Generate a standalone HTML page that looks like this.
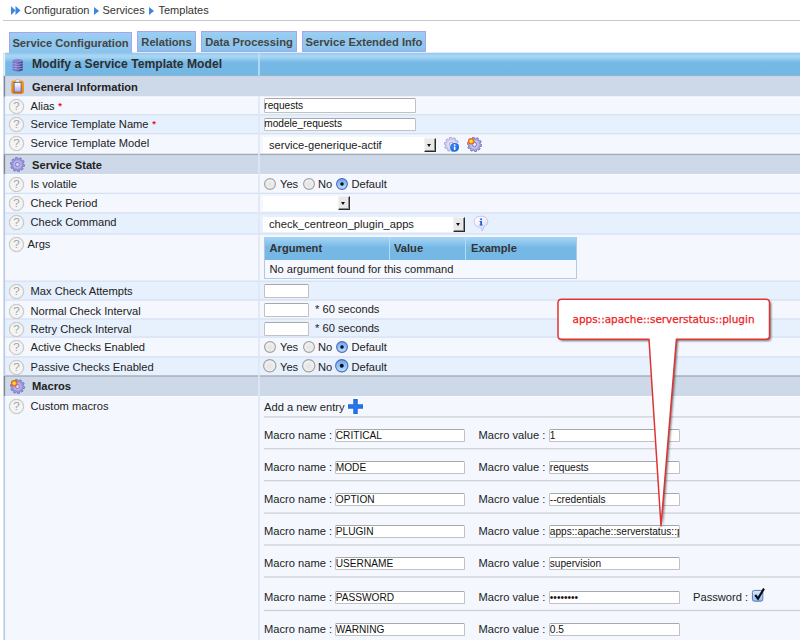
<!DOCTYPE html>
<html><head><meta charset="utf-8"><title>Templates</title>
<style>
html,body{margin:0;padding:0;}
body{width:800px;height:640px;overflow:hidden;background:#fff;font-family:"Liberation Sans",Arial,sans-serif;font-size:11px;color:#222;position:relative;}
div,span{box-sizing:border-box;}
.bc{position:absolute;left:24px;top:3px;font-size:11px;color:#333;white-space:nowrap;line-height:14px;}
.hr{position:absolute;left:3px;top:20px;width:797px;height:1px;background:#c9c9c9;}
.tab{position:absolute;border:1px solid #a9a3ec;border-bottom:none;background:linear-gradient(#9bcef2,#88c3ec);font-weight:bold;font-size:11.2px;color:#444;text-align:center;white-space:nowrap;}
.lbl{position:absolute;left:31px;font-size:11.15px;line-height:14px;color:#222;white-space:nowrap;}
.sec{position:absolute;left:32px;font-weight:bold;font-size:11.15px;line-height:14px;color:#222;white-space:nowrap;}
.req{color:#f0102a;font-size:9.5px;font-weight:bold;position:relative;top:-1.5px;left:0.5px;}
.q{position:absolute;left:9px;width:15px;height:15px;border:1px solid #c6c6c6;border-radius:50%;background:#f4f4f4;color:#a2a2a2;font-size:11.5px;line-height:13px;text-align:center;box-shadow:0 0 1px #ccc;}
.inp{position:absolute;border:1px solid #c2c2c2;border-top-color:#a8a8a8;border-radius:1.5px;background:#fff;font-size:10.3px;color:#111;line-height:13px;padding-left:0.5px;white-space:nowrap;overflow:hidden;}
.itx{position:absolute;font-size:10.15px;line-height:14px;color:#111;white-space:nowrap;overflow:hidden;}
.txt{position:absolute;font-size:11.15px;line-height:14px;color:#222;white-space:nowrap;}
.selbg{position:absolute;background:#fff;}
.arrow{position:absolute;width:12px;height:14px;border-top:1px solid #f2f2f2;border-left:1px solid #f2f2f2;border-right:1px solid #2a2a2a;border-bottom:1px solid #2a2a2a;background:#e9e9e9;box-shadow:inset -1px -1px 0 #8c8c8c;}
.arrow::after{content:"";position:absolute;left:2px;top:4.5px;border-left:2.8px solid transparent;border-right:2.8px solid transparent;border-top:3px solid #111;}
</style></head><body>

<svg style="position:absolute;left:11px;top:6px" width="10" height="9" viewBox="0 0 10 9"><path d="M0 0 L4.5 4.5 L0 9 Z M4.5 0 L9.5 4.5 L4.5 9 Z" fill="#3a86e0"/></svg>
<div class="bc" style="left:24px;">Configuration</div>
<svg style="position:absolute;left:94px;top:6.5px" width="5" height="8" viewBox="0 0 5 8"><path d="M0 0 L5 4 L0 8 Z" fill="#3a86e0"/></svg>
<div class="bc" style="left:102.5px;">Services</div>
<svg style="position:absolute;left:149px;top:6.5px" width="5" height="8" viewBox="0 0 5 8"><path d="M0 0 L5 4 L0 8 Z" fill="#3a86e0"/></svg>
<div class="bc" style="left:158.5px;">Templates</div>
<div class="hr"></div>
<div class="tab" style="left:9px;top:32px;width:123px;height:21px;line-height:20px;">Service Configuration</div>
<div class="tab" style="left:137px;top:31px;width:59px;height:21px;line-height:20px;border-bottom:1px solid #a9a3ec;">Relations</div>
<div class="tab" style="left:201px;top:31px;width:96px;height:21px;line-height:20px;border-bottom:1px solid #a9a3ec;">Data Processing</div>
<div class="tab" style="left:302px;top:31px;width:124px;height:21px;line-height:20px;border-bottom:1px solid #a9a3ec;">Service Extended Info</div>
<svg style="position:absolute;left:0;top:0" width="800" height="640" viewBox="0 0 800 640"><defs><linearGradient id="hg" x1="0" x2="0" y1="0" y2="1"><stop offset="0" stop-color="#8fc4ea"/><stop offset="0.12" stop-color="#a7d6f4"/><stop offset="0.2" stop-color="#a4d4f3"/><stop offset="0.42" stop-color="#76b9e7"/><stop offset="0.95" stop-color="#73b7e5"/><stop offset="1" stop-color="#6fa9d2"/></linearGradient></defs><rect x="4.5" y="75.6" width="796" height="21.00" fill="#cdd8e8"/><rect x="4.5" y="96.6" width="796" height="18.20" fill="#f4f8fe"/><rect x="4.5" y="114.8" width="796" height="18.90" fill="#e7f0fd"/><rect x="4.5" y="133.7" width="796" height="20.70" fill="#f4f8fe"/><rect x="4.5" y="154.4" width="796" height="19.60" fill="#cdd8e8"/><rect x="4.5" y="174.0" width="796" height="19.40" fill="#f4f8fe"/><rect x="4.5" y="193.4" width="796" height="19.60" fill="#f4f8fe"/><rect x="4.5" y="213.0" width="796" height="21.00" fill="#e7f0fd"/><rect x="4.5" y="234.0" width="796" height="47.20" fill="#f4f8fe"/><rect x="4.5" y="281.2" width="796" height="18.80" fill="#e7f0fd"/><rect x="4.5" y="300.0" width="796" height="19.00" fill="#f4f8fe"/><rect x="4.5" y="319.0" width="796" height="18.10" fill="#e7f0fd"/><rect x="4.5" y="337.1" width="796" height="19.90" fill="#f4f8fe"/><rect x="4.5" y="357.0" width="796" height="19.00" fill="#e7f0fd"/><rect x="4.5" y="376.0" width="796" height="20.00" fill="#cdd8e8"/><rect x="4.5" y="396.0" width="796" height="244.00" fill="#f4f8fe"/><rect x="4.5" y="52.7" width="796" height="22.9" fill="url(#hg)"/><rect x="4.5" y="114.10" width="796" height="1.4" fill="#d7e1f2"/><rect x="4.5" y="133.00" width="796" height="1.4" fill="#d7e1f2"/><rect x="4.5" y="192.70" width="796" height="1.4" fill="#d7e1f2"/><rect x="4.5" y="212.30" width="796" height="1.4" fill="#d7e1f2"/><rect x="4.5" y="233.30" width="796" height="1.4" fill="#d7e1f2"/><rect x="4.5" y="280.50" width="796" height="1.4" fill="#d7e1f2"/><rect x="4.5" y="299.30" width="796" height="1.4" fill="#d7e1f2"/><rect x="4.5" y="318.30" width="796" height="1.4" fill="#d7e1f2"/><rect x="4.5" y="336.40" width="796" height="1.4" fill="#d7e1f2"/><rect x="4.5" y="356.30" width="796" height="1.4" fill="#d7e1f2"/><rect x="4.5" y="96.70" width="796" height="1" fill="#fbfcff" opacity="0.8"/><rect x="4.5" y="152.70" width="796" height="1" fill="#fbfcff" opacity="0.8"/><rect x="4.5" y="174.00" width="796" height="1" fill="#fbfcff" opacity="0.8"/><rect x="4.5" y="396.00" width="796" height="1" fill="#fbfcff" opacity="0.8"/><rect x="4.5" y="153.70" width="796" height="1.4" fill="#a4abb5"/><rect x="4.5" y="375.30" width="796" height="1.4" fill="#a4abb5"/><rect x="4.5" y="75.2" width="796" height="0.9" fill="#8fa9c2" opacity="0.7"/><rect x="258.1" y="96.6" width="1.7" height="544" fill="#dfe7f6"/><rect x="258.1" y="52.7" width="1.7" height="22.9" fill="#b9def7"/><rect x="3.4" y="53" width="1.7" height="587" fill="#b8cbe5"/><rect x="3.8" y="75.6" width="1.3" height="21.00" fill="#80858e"/><rect x="3.8" y="154.4" width="1.3" height="19.60" fill="#80858e"/><rect x="3.8" y="376.0" width="1.3" height="20.00" fill="#80858e"/><rect x="3.6" y="53.2" width="1.5" height="22.4" fill="#e4f0fa"/></svg>
<svg style="position:absolute;left:12px;top:57.6px" width="12" height="15" viewBox="0 0 12 15"><defs><linearGradient id="dbg" x1="0" x2="1" y1="0" y2="0"><stop offset="0" stop-color="#6b65bc"/><stop offset="0.3" stop-color="#7f7acc"/><stop offset="0.7" stop-color="#5650a4"/><stop offset="1" stop-color="#322e78"/></linearGradient></defs><path d="M0.7 2.8 Q5.6 0.4 10.6 2.8 V12.2 Q5.6 14.9 0.7 12.2 Z" fill="url(#dbg)"/><ellipse cx="5.65" cy="2.9" rx="4.9" ry="1.3" fill="#8a85d2"/><path d="M0.8 5.6 Q5.6 6.9 10.5 5.6 M0.8 8 Q5.6 9.3 10.5 8 M0.8 10.4 Q5.6 11.7 10.5 10.4" fill="none" stroke="#c4c1ef" stroke-width="0.8" opacity="0.8"/></svg>
<svg style="position:absolute;left:11px;top:79px" width="14" height="16" viewBox="0 0 14 16"><defs><linearGradient id="cpg" x1="0" x2="0" y1="0" y2="1"><stop offset="0" stop-color="#f59a28"/><stop offset="1" stop-color="#e8830f"/></linearGradient><linearGradient id="ppg" x1="0" x2="0" y1="0" y2="1"><stop offset="0" stop-color="#ffffff"/><stop offset="0.35" stop-color="#e6e5fa"/><stop offset="1" stop-color="#a9a6ea"/></linearGradient></defs><rect x="0.3" y="1.6" width="12.6" height="13.4" rx="2.4" fill="url(#cpg)"/><rect x="3.1" y="3.5" width="7" height="9.6" fill="url(#ppg)" stroke="#5e5d74" stroke-width="0.8"/><rect x="4.8" y="0.5" width="3.6" height="2.6" rx="0.9" fill="#e9e9ee" stroke="#a8a8b0" stroke-width="0.5"/></svg>
<svg style="position:absolute;left:10px;top:157px" width="15" height="15" viewBox="0 0 15 15"><path d="M14.70 7.68 L14.43 9.46 L12.85 9.46 L12.28 10.61 L13.22 11.87 L11.95 13.16 L10.68 12.23 L9.54 12.82 L9.56 14.40 L7.78 14.69 L7.29 13.20 L6.02 13.00 L5.11 14.29 L3.50 13.48 L3.98 11.98 L3.07 11.08 L1.57 11.59 L0.74 9.99 L2.02 9.06 L1.81 7.79 L0.30 7.32 L0.57 5.54 L2.15 5.54 L2.72 4.39 L1.78 3.13 L3.05 1.84 L4.32 2.77 L5.46 2.18 L5.44 0.60 L7.22 0.31 L7.71 1.80 L8.98 2.00 L9.89 0.71 L11.50 1.52 L11.02 3.02 L11.93 3.92 L13.43 3.41 L14.26 5.01 L12.98 5.94 L13.19 7.21 Z" fill="#9a95da" stroke="#6f6abf" stroke-width="0.7" stroke-linejoin="round"/><circle cx="7.5" cy="7.5" r="4.3" fill="#fff" opacity="0.28"/><circle cx="7.5" cy="7.5" r="2.1" fill="#d5d3f3" stroke="#6f6abf" stroke-width="0.7"/></svg>
<svg style="position:absolute;left:10px;top:379px" width="15" height="15" viewBox="0 0 15 15"><path d="M14.70 7.68 L14.43 9.46 L12.85 9.46 L12.28 10.61 L13.22 11.87 L11.95 13.16 L10.68 12.23 L9.54 12.82 L9.56 14.40 L7.78 14.69 L7.29 13.20 L6.02 13.00 L5.11 14.29 L3.50 13.48 L3.98 11.98 L3.07 11.08 L1.57 11.59 L0.74 9.99 L2.02 9.06 L1.81 7.79 L0.30 7.32 L0.57 5.54 L2.15 5.54 L2.72 4.39 L1.78 3.13 L3.05 1.84 L4.32 2.77 L5.46 2.18 L5.44 0.60 L7.22 0.31 L7.71 1.80 L8.98 2.00 L9.89 0.71 L11.50 1.52 L11.02 3.02 L11.93 3.92 L13.43 3.41 L14.26 5.01 L12.98 5.94 L13.19 7.21 Z" fill="#9a95da" stroke="#6f6abf" stroke-width="0.7" stroke-linejoin="round"/><circle cx="7.5" cy="7.5" r="4.3" fill="#fff" opacity="0.28"/><circle cx="7.5" cy="7.5" r="2.1" fill="#d5d3f3" stroke="#6f6abf" stroke-width="0.7"/><circle cx="4.2" cy="4.2" r="3.3" fill="#f0531f" opacity="0.85"/><circle cx="4.2" cy="4.2" r="2.3" fill="#ff9414"/><circle cx="4.2" cy="4.2" r="1.5" fill="#ffe620"/></svg>
<svg style="position:absolute;left:444px;top:136.5px" width="15" height="15" viewBox="0 0 15 15"><path d="M14.70 7.68 L14.43 9.46 L12.85 9.46 L12.28 10.61 L13.22 11.87 L11.95 13.16 L10.68 12.23 L9.54 12.82 L9.56 14.40 L7.78 14.69 L7.29 13.20 L6.02 13.00 L5.11 14.29 L3.50 13.48 L3.98 11.98 L3.07 11.08 L1.57 11.59 L0.74 9.99 L2.02 9.06 L1.81 7.79 L0.30 7.32 L0.57 5.54 L2.15 5.54 L2.72 4.39 L1.78 3.13 L3.05 1.84 L4.32 2.77 L5.46 2.18 L5.44 0.60 L7.22 0.31 L7.71 1.80 L8.98 2.00 L9.89 0.71 L11.50 1.52 L11.02 3.02 L11.93 3.92 L13.43 3.41 L14.26 5.01 L12.98 5.94 L13.19 7.21 Z" fill="#d2d1f0" stroke="#9795d0" stroke-width="0.7" stroke-linejoin="round"/><circle cx="7.5" cy="7.5" r="4.3" fill="#fff" opacity="0.28"/><circle cx="7.5" cy="7.5" r="2.1" fill="#ecebfa" stroke="#9795d0" stroke-width="0.7"/><circle cx="10.6" cy="10.4" r="4.4" fill="#1f6fe0"/><circle cx="10" cy="9.6" r="3" fill="#3f8df0" opacity="0.6"/><rect x="9.9" y="9.6" width="1.5" height="3.4" fill="#fff"/><rect x="9.9" y="7.4" width="1.5" height="1.4" fill="#fff"/></svg>
<svg style="position:absolute;left:466.5px;top:137px" width="15" height="15" viewBox="0 0 15 15"><path d="M14.70 7.68 L14.43 9.46 L12.85 9.46 L12.28 10.61 L13.22 11.87 L11.95 13.16 L10.68 12.23 L9.54 12.82 L9.56 14.40 L7.78 14.69 L7.29 13.20 L6.02 13.00 L5.11 14.29 L3.50 13.48 L3.98 11.98 L3.07 11.08 L1.57 11.59 L0.74 9.99 L2.02 9.06 L1.81 7.79 L0.30 7.32 L0.57 5.54 L2.15 5.54 L2.72 4.39 L1.78 3.13 L3.05 1.84 L4.32 2.77 L5.46 2.18 L5.44 0.60 L7.22 0.31 L7.71 1.80 L8.98 2.00 L9.89 0.71 L11.50 1.52 L11.02 3.02 L11.93 3.92 L13.43 3.41 L14.26 5.01 L12.98 5.94 L13.19 7.21 Z" fill="#aeabe0" stroke="#5f5bb0" stroke-width="0.7" stroke-linejoin="round"/><circle cx="7.5" cy="7.5" r="4.3" fill="#fff" opacity="0.28"/><circle cx="7.5" cy="7.5" r="2.1" fill="#e6e5f8" stroke="#5f5bb0" stroke-width="0.7"/><circle cx="4.2" cy="4.2" r="3.3" fill="#f0531f" opacity="0.85"/><circle cx="4.2" cy="4.2" r="2.3" fill="#ff9414"/><circle cx="4.2" cy="4.2" r="1.5" fill="#ffe620"/></svg>
<svg style="position:absolute;left:473px;top:215px" width="16" height="17" viewBox="0 0 16 17"><defs><linearGradient id="bg1" x1="0" x2="1" y1="0" y2="1"><stop offset="0" stop-color="#ffffff"/><stop offset="0.5" stop-color="#f1f0fc"/><stop offset="1" stop-color="#cfcdf2"/></linearGradient></defs><path d="M8 1.2 C12 1.2 14.8 3.4 14.8 6.6 C14.8 9.2 13 11.2 10.6 11.9 C10.6 13.6 10 15 8.8 16 C9.1 14.6 8.8 13.2 7.8 12.4 C3.8 12.3 1.2 9.8 1.2 6.6 C1.2 3.4 4 1.2 8 1.2 Z" fill="url(#bg1)" stroke="#bdbbea" stroke-width="0.9"/><rect x="7.2" y="6" width="1.8" height="4.2" fill="#1c63d8"/><rect x="6.5" y="6" width="1.2" height="0.9" fill="#1c63d8"/><rect x="6.5" y="9.6" width="3.2" height="0.9" fill="#1c63d8"/><circle cx="8.1" cy="4.2" r="1" fill="#1c63d8"/></svg>
<div class="sec" style="left:32px;top:57px;font-size:12.15px;line-height:15px;color:#2e2e2e;">Modify a Service Template Model</div>
<div class="sec" style="top:80px;">General Information</div>
<div class="sec" style="top:158px;">Service State</div>
<div class="sec" style="top:379px;">Macros</div>
<div class="q" style="top:99px;">?</div>
<div class="lbl" style="left:30.5px;top:99px;">Alias <span class="req">*</span></div>
<div class="q" style="top:117px;">?</div>
<div class="lbl" style="left:30.5px;top:117px;">Service Template Name <span class="req">*</span></div>
<div class="q" style="top:136px;">?</div>
<div class="lbl" style="left:30.5px;top:136px;">Service Template Model</div>
<div class="q" style="top:177px;">?</div>
<div class="lbl" style="left:30.5px;top:177px;">Is volatile</div>
<div class="q" style="top:196px;">?</div>
<div class="lbl" style="left:30.5px;top:196px;">Check Period</div>
<div class="q" style="top:215px;">?</div>
<div class="lbl" style="left:30.5px;top:215px;">Check Command</div>
<div class="q" style="top:237px;">?</div>
<div class="lbl" style="left:27.5px;top:237px;">Args</div>
<div class="q" style="top:284px;">?</div>
<div class="lbl" style="left:30.5px;top:284px;">Max Check Attempts</div>
<div class="q" style="top:304px;">?</div>
<div class="lbl" style="left:30.5px;top:304px;">Normal Check Interval</div>
<div class="q" style="top:322px;">?</div>
<div class="lbl" style="left:30.5px;top:322px;">Retry Check Interval</div>
<div class="q" style="top:340px;">?</div>
<div class="lbl" style="left:30.5px;top:340px;">Active Checks Enabled</div>
<div class="q" style="top:360px;">?</div>
<div class="lbl" style="left:30.5px;top:360px;">Passive Checks Enabled</div>
<div class="q" style="top:399px;">?</div>
<div class="lbl" style="left:30.5px;top:399px;">Custom macros</div>
<div class="inp" style="left:263.5px;top:98px;width:152.5px;height:14.5px;"></div>
<div class="itx" style="left:264.3px;top:98.6px;width:150.7px;">requests</div>
<div class="inp" style="left:263.5px;top:118px;width:152.5px;height:13px;"></div>
<div class="itx" style="left:264.3px;top:117px;width:150.7px;">modele_requests</div>
<div class="selbg" style="left:263px;top:137px;width:161px;height:16px;"></div>
<div class="txt" style="left:269px;top:138px;">service-generique-actif</div>
<div class="arrow" style="left:424px;top:138px;"></div>
<svg width="0" height="0" style="position:absolute"><defs><radialGradient id="rg0" cx="0.5" cy="0.55" r="0.6"><stop offset="0" stop-color="#e2e2e2"/><stop offset="0.7" stop-color="#f0f0f0"/><stop offset="1" stop-color="#fcfcfc"/></radialGradient><linearGradient id="rg1" x1="0" x2="0" y1="0" y2="1"><stop offset="0" stop-color="#68a8ee"/><stop offset="0.55" stop-color="#93c8f8"/><stop offset="1" stop-color="#c0e3fd"/></linearGradient></defs></svg>
<svg style="position:absolute;left:263.20px;top:176.80px" width="14" height="14" viewBox="0 0 14 14"><circle cx="7.0" cy="7.0" r="5.40" fill="url(#rg0)" stroke="#a2a2a2" stroke-width="1.2"/></svg>
<div class="txt" style="left:280px;top:177px;">Yes</div>
<svg style="position:absolute;left:301.70px;top:176.80px" width="14" height="14" viewBox="0 0 14 14"><circle cx="7.0" cy="7.0" r="5.40" fill="url(#rg0)" stroke="#a2a2a2" stroke-width="1.2"/></svg>
<div class="txt" style="left:318px;top:177px;">No</div>
<svg style="position:absolute;left:334.50px;top:176.80px" width="14" height="14" viewBox="0 0 14 14"><circle cx="7.0" cy="7.0" r="5.40" fill="url(#rg1)" stroke="#5566b8" stroke-width="1.1"/><circle cx="7.0" cy="7.0" r="1.74" fill="#0a0a14"/></svg>
<div class="txt" style="left:351.5px;top:177px;">Default</div>
<div class="selbg" style="left:263px;top:196px;width:75px;height:15px;"></div>
<div class="arrow" style="left:338px;top:196px;"></div>
<div class="selbg" style="left:263px;top:217px;width:190px;height:15px;"></div>
<div class="txt" style="left:269px;top:217px;">check_centreon_plugin_apps</div>
<div class="arrow" style="left:453px;top:217px;height:15px;"></div>
<div style="position:absolute;left:264px;top:237px;width:313px;height:41.5px;border:1px solid #b4c8e2;background:#f5f8fe;"></div>
<div style="position:absolute;left:265px;top:237px;width:311px;height:23px;background:linear-gradient(#a8d6f5 0,#76b9e7 45%,#74b7e5 100%);"></div>
<div style="position:absolute;left:389px;top:237px;width:1px;height:23px;background:#b5dcf6;"></div>
<div style="position:absolute;left:465px;top:237px;width:1px;height:23px;background:#b5dcf6;"></div>
<div class="txt" style="left:269.5px;top:241px;font-weight:bold;color:#333;">Argument</div>
<div class="txt" style="left:394px;top:241px;font-weight:bold;color:#333;">Value</div>
<div class="txt" style="left:471px;top:241px;font-weight:bold;color:#333;">Example</div>
<div class="txt" style="left:269.5px;top:262px;">No argument found for this command</div>
<div class="inp" style="left:263.5px;top:284px;width:45px;height:13.5px;"></div>
<div class="inp" style="left:263.5px;top:303px;width:45px;height:13.5px;"></div>
<div class="inp" style="left:263.5px;top:322px;width:45px;height:13.5px;"></div>
<div class="txt" style="left:315px;top:302px;">* 60 seconds</div>
<div class="txt" style="left:315px;top:321px;">* 60 seconds</div>
<svg style="position:absolute;left:263.20px;top:340.20px" width="14" height="14" viewBox="0 0 14 14"><circle cx="7.0" cy="7.0" r="5.40" fill="url(#rg0)" stroke="#a2a2a2" stroke-width="1.2"/></svg>
<div class="txt" style="left:280px;top:340px;">Yes</div>
<svg style="position:absolute;left:301.70px;top:340.20px" width="14" height="14" viewBox="0 0 14 14"><circle cx="7.0" cy="7.0" r="5.40" fill="url(#rg0)" stroke="#a2a2a2" stroke-width="1.2"/></svg>
<div class="txt" style="left:318px;top:340px;">No</div>
<svg style="position:absolute;left:334.50px;top:340.20px" width="14" height="14" viewBox="0 0 14 14"><circle cx="7.0" cy="7.0" r="5.40" fill="url(#rg1)" stroke="#5566b8" stroke-width="1.1"/><circle cx="7.0" cy="7.0" r="1.74" fill="#0a0a14"/></svg>
<div class="txt" style="left:351.5px;top:340px;">Default</div>
<svg style="position:absolute;left:262.45px;top:357.85px" width="15.5" height="15.5" viewBox="0 0 15.5 15.5"><circle cx="7.75" cy="7.75" r="6.15" fill="url(#rg0)" stroke="#a2a2a2" stroke-width="1.2"/></svg>
<div class="txt" style="left:280px;top:360px;">Yes</div>
<svg style="position:absolute;left:300.95px;top:357.85px" width="15.5" height="15.5" viewBox="0 0 15.5 15.5"><circle cx="7.75" cy="7.75" r="6.15" fill="url(#rg0)" stroke="#a2a2a2" stroke-width="1.2"/></svg>
<div class="txt" style="left:318px;top:360px;">No</div>
<svg style="position:absolute;left:333.75px;top:357.85px" width="15.5" height="15.5" viewBox="0 0 15.5 15.5"><circle cx="7.75" cy="7.75" r="6.15" fill="url(#rg1)" stroke="#5566b8" stroke-width="1.1"/><circle cx="7.75" cy="7.75" r="1.96" fill="#0a0a14"/></svg>
<div class="txt" style="left:351.5px;top:360px;">Default</div>
<div class="txt" style="left:264px;top:399.5px;">Add a new entry</div>
<svg style="position:absolute;left:347px;top:397.5px" width="17" height="17" viewBox="-1 -1 17 17"><path d="M5.25 0h4.5v5.25h5.25v4.5h-5.25v5.25h-4.5v-5.25h-5.25v-4.5h5.25z" fill="#1f6be0" stroke="#fff" stroke-width="1.2" stroke-opacity="0.8" paint-order="stroke"/><path d="M6.4 1.2h2.2v5.2h5.2v2.2h-5.2v5.2h-2.2v-5.2h-5.2v-2.2h5.2z" fill="#2b80ee" opacity="0.6"/></svg>
<svg style="position:absolute;left:264px;top:410px" width="536" height="230" viewBox="264 410 536 230"><rect x="264" y="416.25" width="536" height="1.3" fill="#cdd0d4"/><rect x="264" y="448.10" width="536" height="1.3" fill="#cdd0d4"/><rect x="264" y="480.05" width="536" height="1.3" fill="#cdd0d4"/><rect x="264" y="512.45" width="536" height="1.3" fill="#cdd0d4"/><rect x="264" y="544.35" width="536" height="1.3" fill="#cdd0d4"/><rect x="264" y="576.35" width="536" height="1.3" fill="#cdd0d4"/><rect x="264" y="609.85" width="536" height="1.3" fill="#cdd0d4"/></svg>
<div class="txt" style="left:264px;top:428px;">Macro name :</div>
<div class="inp" style="left:335px;top:429px;width:130px;height:13px;"></div>
<div class="itx" style="left:335.8px;top:428.5px;width:128.2px;">CRITICAL</div>
<div class="txt" style="left:478.5px;top:428px;">Macro value :</div>
<div class="inp" style="left:549px;top:429px;width:131px;height:13px;"></div>
<div class="itx" style="left:549.8px;top:428.5px;width:129.2px;">1</div>
<div class="txt" style="left:264px;top:460px;">Macro name :</div>
<div class="inp" style="left:335px;top:461px;width:130px;height:13px;"></div>
<div class="itx" style="left:335.8px;top:460.5px;width:128.2px;">MODE</div>
<div class="txt" style="left:478.5px;top:460px;">Macro value :</div>
<div class="inp" style="left:549px;top:461px;width:131px;height:13px;"></div>
<div class="itx" style="left:549.8px;top:460.5px;width:129.2px;">requests</div>
<div class="txt" style="left:264px;top:492px;">Macro name :</div>
<div class="inp" style="left:335px;top:493px;width:130px;height:13px;"></div>
<div class="itx" style="left:335.8px;top:492.5px;width:128.2px;">OPTION</div>
<div class="txt" style="left:478.5px;top:492px;">Macro value :</div>
<div class="inp" style="left:549px;top:493px;width:131px;height:13px;"></div>
<div class="itx" style="left:549.8px;top:492.5px;width:129.2px;">--credentials</div>
<div class="txt" style="left:264px;top:524px;">Macro name :</div>
<div class="inp" style="left:335px;top:525px;width:130px;height:13px;"></div>
<div class="itx" style="left:335.8px;top:524.5px;width:128.2px;">PLUGIN</div>
<div class="txt" style="left:478.5px;top:524px;">Macro value :</div>
<div class="inp" style="left:549px;top:525px;width:131px;height:13px;"></div>
<div class="itx" style="left:549.8px;top:524.5px;width:129.2px;">apps::apache::serverstatus::plugin</div>
<div class="txt" style="left:264px;top:556px;">Macro name :</div>
<div class="inp" style="left:335px;top:557px;width:130px;height:13px;"></div>
<div class="itx" style="left:335.8px;top:556.5px;width:128.2px;">USERNAME</div>
<div class="txt" style="left:478.5px;top:556px;">Macro value :</div>
<div class="inp" style="left:549px;top:557px;width:131px;height:13px;"></div>
<div class="itx" style="left:549.8px;top:556.5px;width:129.2px;">supervision</div>
<div class="txt" style="left:264px;top:590px;">Macro name :</div>
<div class="inp" style="left:335px;top:591px;width:130px;height:13px;"></div>
<div class="itx" style="left:335.8px;top:590.5px;width:128.2px;">PASSWORD</div>
<div class="txt" style="left:478.5px;top:590px;">Macro value :</div>
<div class="inp" style="left:549px;top:591px;width:131px;height:13px;"></div>
<div class="itx" style="left:549.8px;top:590.5px;width:129.2px;">••••••••</div>
<div class="txt" style="left:693px;top:590px;">Password :</div>
<svg style="position:absolute;left:751px;top:587px" width="16" height="16" viewBox="0 0 16 16"><defs><linearGradient id="cbg" x1="0" x2="0" y1="0" y2="1"><stop offset="0" stop-color="#dcebfc"/><stop offset="1" stop-color="#8fbdf3"/></linearGradient></defs><rect x="1.4" y="3.4" width="10.4" height="10.8" rx="2" fill="url(#cbg)" stroke="#5b78ae"/><path d="M4.2 8 L7 11.6 L13 1.6" fill="none" stroke="#0a0a14" stroke-width="2.1"/></svg>
<div class="txt" style="left:264px;top:622px;">Macro name :</div>
<div class="inp" style="left:335px;top:623px;width:130px;height:13px;"></div>
<div class="itx" style="left:335.8px;top:622.5px;width:128.2px;">WARNING</div>
<div class="txt" style="left:478.5px;top:622px;">Macro value :</div>
<div class="inp" style="left:549px;top:623px;width:131px;height:13px;"></div>
<div class="itx" style="left:549.8px;top:622.5px;width:129.2px;">0.5</div>
<svg style="position:absolute;left:540px;top:290px" width="260" height="250" viewBox="540 290 260 250">
<defs><filter id="sh" x="-5%" y="-5%" width="115%" height="115%"><feGaussianBlur stdDeviation="0.9"/></filter></defs>
<path d="M561.5 299.3 H766 Q769.5 299.3 769.5 302.8 V335.8 Q769.5 339.3 766 339.3 H676.4 L661 526 L649 339.3 H561.5 Q558 339.3 558 335.8 V302.8 Q558 299.3 561.5 299.3 Z" transform="translate(1.6,1.8)" fill="#333" opacity="0.7" filter="url(#sh)"/>
<path d="M561.5 299.3 H766 Q769.5 299.3 769.5 302.8 V335.8 Q769.5 339.3 766 339.3 H676.4 L661 526 L649 339.3 H561.5 Q558 339.3 558 335.8 V302.8 Q558 299.3 561.5 299.3 Z" fill="#fff" stroke="#e03434" stroke-width="1.5" stroke-linejoin="round"/>
<text x="663.5" y="322.8" text-anchor="middle" font-family="DejaVu Sans, sans-serif" font-size="10.5" fill="#ee1c24" stroke="#ee1c24" stroke-width="0.25" textLength="182" lengthAdjust="spacingAndGlyphs">apps::apache::serverstatus::plugin</text>
</svg>
</body></html>
